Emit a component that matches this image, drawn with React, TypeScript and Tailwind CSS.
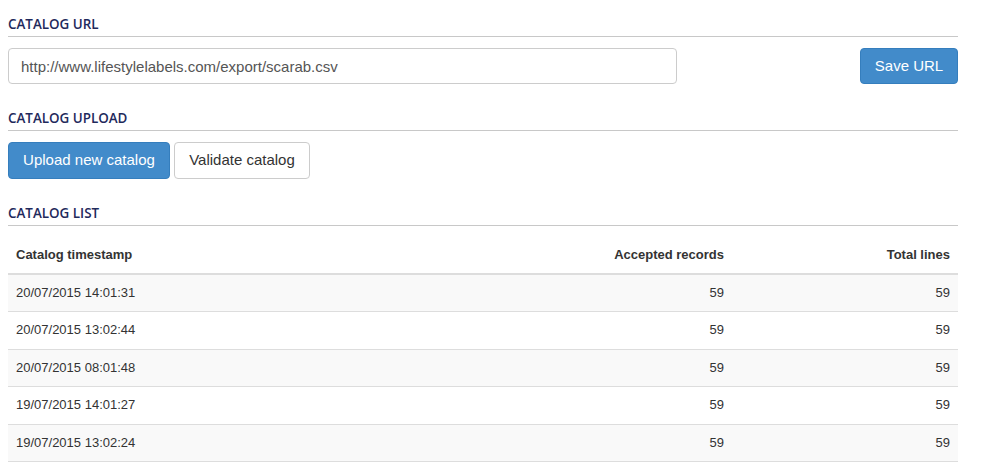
import React from 'react'

const rows = [
  { ts: '20/07/2015 14:01:31', accepted: 59, total: 59 },
  { ts: '20/07/2015 13:02:44', accepted: 59, total: 59 },
  { ts: '20/07/2015 08:01:48', accepted: 59, total: 59 },
  { ts: '19/07/2015 14:01:27', accepted: 59, total: 59 },
  { ts: '19/07/2015 13:02:24', accepted: 59, total: 59 },
]

function SectionTitle({ children, first }: { children: React.ReactNode; first?: boolean }) {
  return (
    <div
      className={`${first ? 'pt-[16px]' : 'pt-[26px]'} pb-[4px] border-b border-[#c8c8c8] font-['Open_Sans',sans-serif] font-semibold text-[13.4px] leading-[16px] text-[#1f2a5c] uppercase`}
    >
      {children}
    </div>
  )
}

export default function App() {
  return (
    <div className="w-[986px] h-[463px] bg-white overflow-hidden font-['Liberation_Sans',Arial,sans-serif] text-[#333]">
      <div className="w-[950px] ml-[8px]">
        {/* Catalog URL */}
        <SectionTitle first>Catalog URL</SectionTitle>
        <div className="mt-[11px] flex items-center justify-between">
          <input
            readOnly
            value="http://www.lifestylelabels.com/export/scarab.csv"
            className="w-[669px] h-[36px] px-[12px] border border-[#ccc] rounded-[4px] text-[15px] text-[#555] outline-none bg-white"
          />
          <button className="w-[98px] h-[36px] rounded-[4px] bg-[#428bca] border border-[#357ebd] text-white text-[15px]">
            Save URL
          </button>
        </div>

        {/* Catalog Upload */}
        <SectionTitle>Catalog upload</SectionTitle>
        <div className="mt-[11px] flex gap-[4px]">
          <button className="w-[162px] h-[37px] rounded-[4px] bg-[#428bca] border border-[#357ebd] text-white text-[15px]">
            Upload new catalog
          </button>
          <button className="w-[136px] h-[37px] rounded-[4px] bg-white border border-[#ccc] text-[#333] text-[15px]">
            Validate catalog
          </button>
        </div>

        {/* Catalog List */}
        <SectionTitle>Catalog list</SectionTitle>
        <table className="mt-[11px] w-full text-[13px] border-collapse">
          <thead>
            <tr className="border-b-2 border-[#ddd]">
              <th className="px-[8px] py-[8px] leading-[20px] text-left font-bold">Catalog timestamp</th>
              <th className="px-[8px] py-[8px] leading-[20px] text-right font-bold">Accepted records</th>
              <th className="w-[226px] px-[8px] py-[8px] leading-[20px] text-right font-bold">Total lines</th>
            </tr>
          </thead>
          <tbody>
            {rows.map((r, i) => (
              <tr key={i} className={`border-t border-[#ddd] ${i % 2 === 0 ? 'bg-[#f9f9f9]' : 'bg-white'} ${i === rows.length - 1 ? 'border-b' : ''}`}>
                <td className="px-[8px] py-[8px] leading-[20.4px]">{r.ts}</td>
                <td className="px-[8px] py-[8px] leading-[20.4px] text-right">{r.accepted}</td>
                <td className="px-[8px] py-[8px] leading-[20.4px] text-right">{r.total}</td>
              </tr>
            ))}
          </tbody>
        </table>
      </div>
    </div>
  )
}
